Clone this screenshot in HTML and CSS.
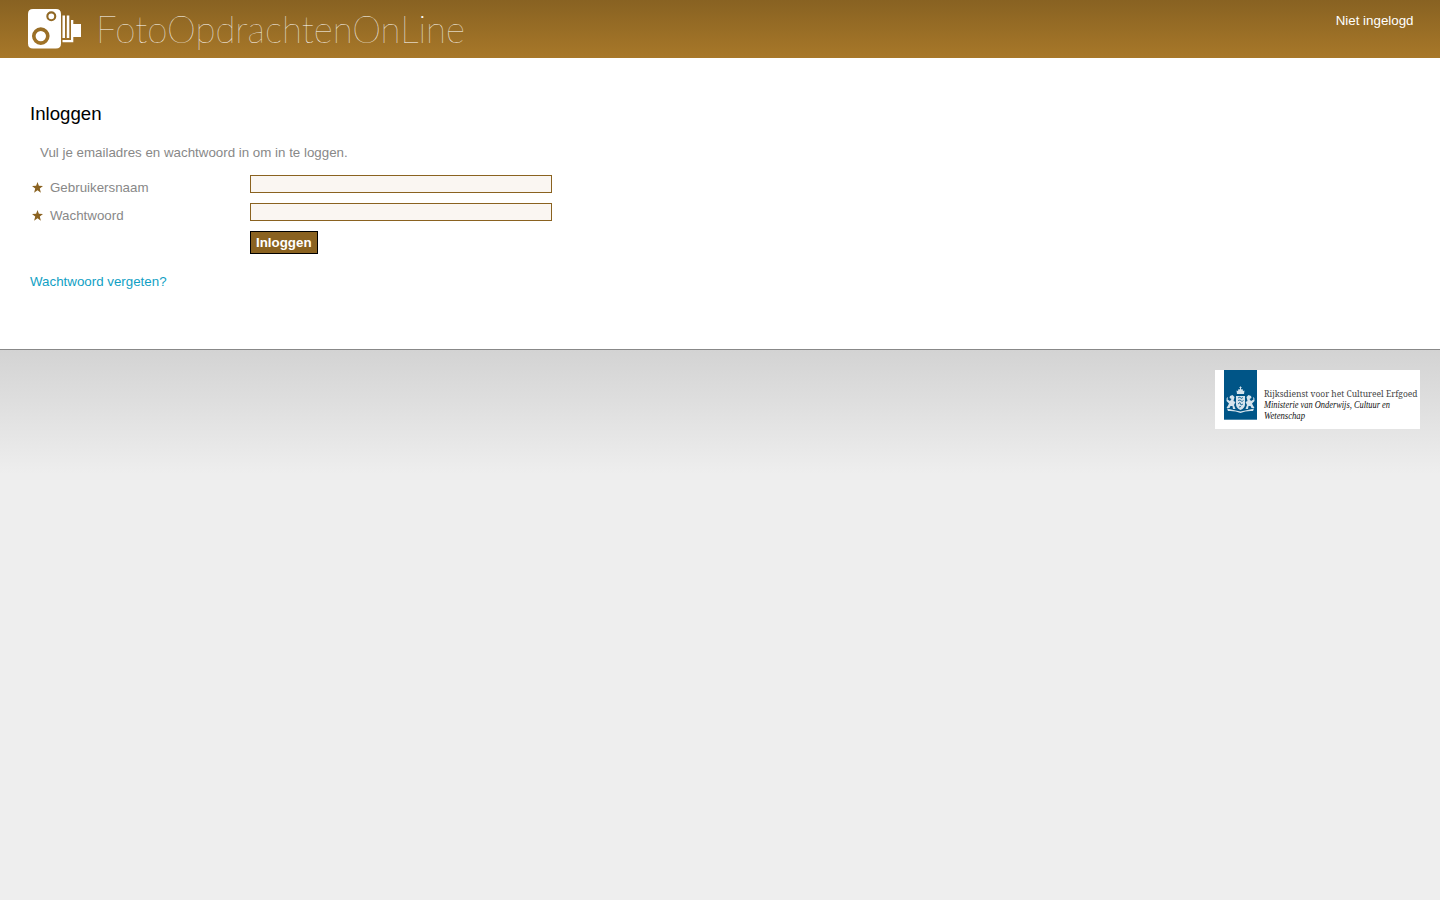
FILE: index.html
```html
<!DOCTYPE html>
<html lang="nl">
<head>
<meta charset="utf-8">
<title>FotoOpdrachtenOnLine</title>
<link rel="stylesheet" href="styles.css">
</head>
<body>
<header class="header">
  <svg class="brand" width="480" height="58" viewBox="0 0 480 58" role="img" aria-label="FotoOpdrachtenOnLine">
    <path class="camera" fill-rule="evenodd" d="M33 9H56Q61 9 61 14V43.500Q61 48.500 56 48.500H33Q28 48.500 28 43.500V14Q28 9 33 9ZM51.300 11.300A5 5 0 1 0 51.300 21.300A5 5 0 1 0 51.300 11.300ZM51.300 13.400A2.900 2.900 0 1 1 51.300 19.200A2.900 2.900 0 1 1 51.300 13.400ZM40.800 27.300A8.800 8.800 0 1 0 40.800 44.900A8.800 8.800 0 1 0 40.800 27.300ZM40.800 30.900A5.200 5.200 0 1 1 40.800 41.300A5.200 5.200 0 1 1 40.800 30.900Z"/>
    <path class="camera" d="M62.500 15.500H65V38H62.500ZM66.800 15.500H69.300V38H66.800ZM71 20H73.300V24H81V37H73.300V42.300H62.500V40H71Z"/>
    <text class="brand-name" x="96" y="43" textLength="369" lengthAdjust="spacingAndGlyphs">FotoOpdrachtenOnLine</text>
  </svg>
  <span class="status">Niet ingelogd</span>
</header>
<main class="content">
  <h1 class="title">Inloggen</h1>
  <p class="intro">Vul je emailadres en wachtwoord in om in te loggen.</p>
  <form class="login">
    <div class="row">
      <label class="label" for="user"><svg class="star" width="11" height="11" viewBox="0 0 12 12"><path d="M6 0L7.500 4.200L12 4.400L8.500 7.200L9.700 11.600L6 9.100L2.300 11.600L3.500 7.200L0 4.400L4.500 4.200Z"/></svg>Gebruikersnaam</label>
      <input class="field" id="user" type="text">
    </div>
    <div class="row">
      <label class="label" for="pass"><svg class="star" width="11" height="11" viewBox="0 0 12 12"><path d="M6 0L7.500 4.200L12 4.400L8.500 7.200L9.700 11.600L6 9.100L2.300 11.600L3.500 7.200L0 4.400L4.500 4.200Z"/></svg>Wachtwoord</label>
      <input class="field" id="pass" type="password">
    </div>
    <button class="submit" type="button">Inloggen</button>
  </form>
  <a class="forgot" href="#">Wachtwoord vergeten?</a>
</main>
<footer class="footer">
  <svg class="ministry" width="205" height="59" viewBox="0 0 205 59">
    <rect width="205" height="59" fill="#fff"/>
    <rect x="9" width="33" height="49.700" fill="#005587"/>
    <g fill="#d5e3ec">
      <path d="M22 24L21.500 20.500L23 21L23.500 19L25 19.500V18H24.300V17.200H25V16.400H26V17.200H26.700V18H26V19.500L27.500 19L28 21L29.500 20.500L29 24Z"/>
      <path d="M21 26H30V34Q30 38 25.500 40Q21 38 21 34Z"/>
      <path d="M19.500 27L17.500 25L15 26L14.500 28L16.500 29L15 31L12.500 29.500L13 27L11.700 28L11.500 31L14 33.500L13 35.500L11.500 38H14.500L15.500 36L17.500 36L18 39H20.500L19 35L20.500 32L18.500 31Z"/>
      <path d="M31.500 27L33.500 25L36 26L36.500 28L34.500 29L36 31L38.500 29.500L38 27L39.300 28L39.500 31L37 33.500L38 35.500L39.500 38H36.500L35.500 36L33.500 36L33 39H30.500L32 35L30.500 32L32.500 31Z"/>
      <path d="M12 38.500Q18 40 25.500 41.500Q33 40 39 38.500L38 41Q31 40.500 25.500 43Q20 40.500 13 41Z"/>
    </g>
    <path d="M23 28L25 27L26 28.500L28 27.500M23 30.500L25 30L27 31.500L28.500 30.500M23 34L25 32.500L26 35L28 34M24 37L26 36.500" fill="none" stroke="#005587" stroke-width=".8"/>
    <text class="agency" x="49" y="26.500" textLength="153.500" lengthAdjust="spacingAndGlyphs">Rijksdienst voor het Cultureel Erfgoed</text>
    <text class="department" x="49" y="38" textLength="126" lengthAdjust="spacingAndGlyphs">Ministerie van Onderwijs, Cultuur en</text>
    <text class="department" x="49" y="49" textLength="41" lengthAdjust="spacingAndGlyphs">Wetenschap</text>
  </svg>
</footer>
</body>
</html>
```
FILE: styles.css
```css
* { box-sizing: border-box; }
html { background: #eee; }
body {
  margin: 0;
  font: 13.333px/16px "Liberation Sans", Arial, sans-serif;
  color: #888;
}
.header {
  display: flex;
  justify-content: space-between;
  height: 58px;
  padding-right: 26.5px;
  background: linear-gradient(#886222, #a87829);
}
.brand { display: block; overflow: visible; }
.camera { fill: #fff; }
.brand-name {
  font: 200 38px Lato, "Open Sans", sans-serif;
  fill: #fff;
}
.status { padding-top: 13px; color: #fff; }
.content {
  height: 291px;
  padding: 45px 30px 0;
  background: #fff;
}
.title {
  margin: 0;
  font-size: 18.667px;
  line-height: 22px;
  font-weight: 400;
  color: #000;
}
.intro { margin: 20px 0 14px 10px; }
.login { display: flex; flex-direction: column; gap: 10px; align-items: flex-start; }
.row { display: flex; height: 18px; }
.label { display: flex; width: 220px; padding-top: 5px; }
.star { flex: none; margin: 2px 7px 0 2px; fill: #8a6220; }
.field {
  width: 302px;
  height: 18px;
  padding: 0;
  border: 1px solid #8a6220;
  background: #faf6f2;
}
.submit {
  width: 68px;
  height: 23px;
  margin-left: 220px;
  padding: 0 0 0 5px;
  border: 1px solid #000;
  background: #8a6220;
  color: #fff;
  font: bold 13.333px "Liberation Sans", Arial, sans-serif;
  text-align: left;
}
.forgot { display: inline-block; margin-top: 20px; color: #119fc4; text-decoration: none; }
.footer {
  display: flex;
  justify-content: flex-end;
  height: 125px;
  padding: 20px 20px 0 0;
  border-top: 1px solid #888;
  background: linear-gradient(#d3d3d3, #eee);
}
.ministry { display: block; overflow: visible; }
.agency { font: 9.3px "Noto Serif", "DejaVu Serif", serif; fill: #444; }
.department { font: italic 9.5px "Liberation Serif", serif; fill: #111; }
```
